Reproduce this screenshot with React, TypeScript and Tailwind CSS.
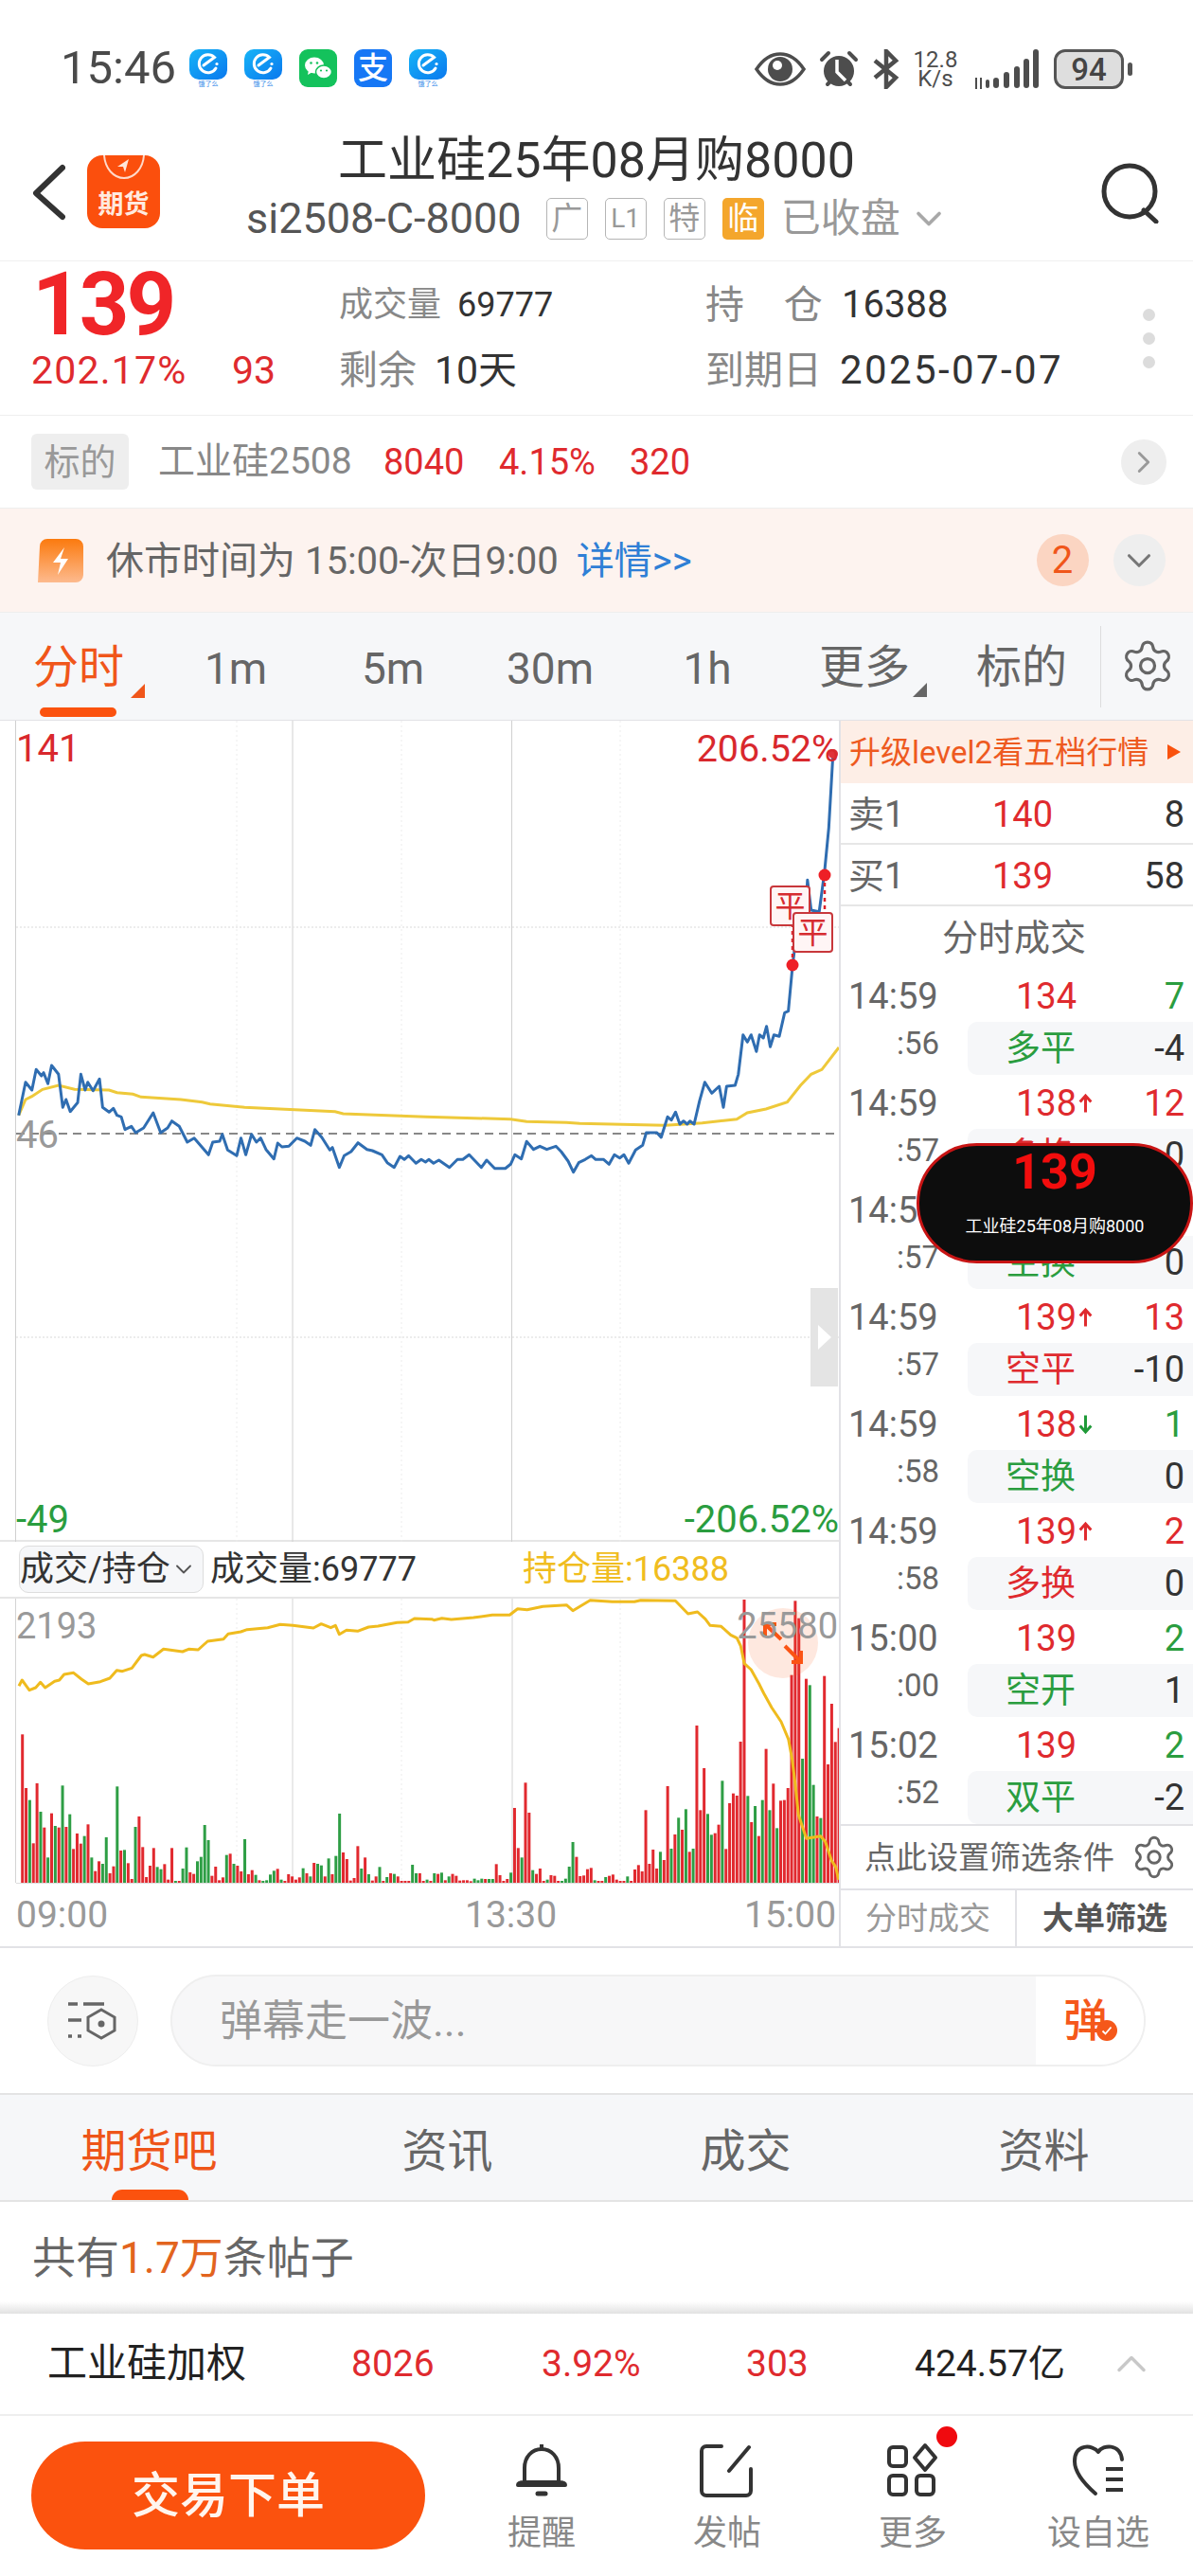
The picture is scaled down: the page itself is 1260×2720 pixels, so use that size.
import React from 'react';
import { Settings, ChevronRight, ChevronDown, ChevronUp } from 'lucide-react';

type Pt = [number, number];

// traced from the reference, x and y in crop coordinates
const priceRaw: Pt[] = [[35,1250],[48,1145],[60,1170],[68,1105],[78,1125],[82,1115],[90,1150],[97,1092],[110,1120],[118,1225],[124,1200],[132,1238],[146,1210],[152,1120],[160,1170],[165,1145],[175,1172],[187,1135],[193,1225],[205,1240],[213,1228],[220,1250],[228,1255],[235,1295],[247,1285],[255,1305],[270,1290],[288,1242],[302,1305],[315,1290],[323,1268],[337,1285],[352,1335],[365,1322],[392,1375],[400,1335],[413,1332],[418,1310],[428,1360],[445,1378],[453,1322],[462,1375],[473,1310],[482,1335],[490,1322],[500,1358],[515,1388],[522,1338],[530,1350],[543,1348],[558,1322],[573,1332],[584,1345],[592,1295],[605,1320],[620,1360],[625,1352],[638,1415],[647,1378],[660,1365],[673,1337],[690,1358],[700,1362],[718,1375],[728,1400],[741,1415],[752,1380],[760,1390],[768,1378],[782,1402],[792,1390],[800,1398],[806,1390],[815,1402],[825,1392],[845,1415],[860,1390],[870,1390],[882,1375],[905,1415],[915,1392],[930,1418],[950,1418],[960,1405],[968,1375],[980,1388],[990,1333],[1003,1358],[1015,1348],[1028,1358],[1045,1348],[1055,1365],[1068,1395],[1078,1430],[1088,1400],[1100,1390],[1112,1378],[1120,1390],[1135,1390],[1145,1405],[1155,1375],[1165,1385],[1173,1375],[1182,1402],[1195,1360],[1208,1345],[1215,1305],[1235,1305],[1243,1320],[1255,1255],[1262,1265],[1270,1240],[1278,1278],[1285,1268],[1292,1278],[1297,1268],[1305,1278],[1315,1205],[1325,1145],[1338,1180],[1352,1158],[1360,1225],[1366,1158],[1382,1155],[1388,1120],[1397,995],[1405,1018],[1412,995],[1422,1048],[1428,995],[1435,1005],[1441,968],[1448,1033],[1455,995],[1465,1000],[1475,925],[1482,920],[1490,775],[1500,640],[1515,600],[1518,505],[1525,600],[1540,605],[1550,480],[1558,340],[1566,105]];
const avgRaw: Pt[] = [[35,1250],[48,1200],[60,1190],[80,1168],[110,1155],[140,1168],[205,1170],[220,1178],[250,1183],[265,1192],[340,1200],[380,1208],[395,1214],[460,1225],[630,1238],[645,1245],[800,1255],[960,1262],[990,1270],[1065,1273],[1090,1276],[1250,1282],[1320,1274],[1385,1262],[1405,1242],[1440,1230],[1480,1208],[1505,1155],[1525,1120],[1545,1105],[1577,1035]];
const holdA: Pt[] = [[12,277],[22,258],[45,290],[65,282],[80,265],[95,282],[125,262],[140,258],[155,240],[185,235],[210,255],[232,270],[270,263],[300,252],[322,227],[340,230],[370,220],[400,180],[410,177],[437,185],[470,160],[530,168],[550,160],[580,162],[610,135],[660,128],[675,112],[715,105],[735,98],[800,92],[840,82],[880,85],[945,93],[970,80],[1000,92],[1015,85],[1027,113],[1050,100],[1085,103],[1120,90],[1150,87],[1210,76],[1245,74],[1265,63],[1320,65]];
const holdB: Pt[] = [[25,68],[50,62],[80,66],[150,60],[210,52],[265,52],[290,32],[320,35],[370,25],[445,20],[465,38],[520,5],[590,10],[660,10],[680,5],[790,7],[830,48],[860,42],[885,65],[900,85],[935,88],[965,115],[985,125],[997,150],[1008,205],[1030,225],[1055,270],[1070,300],[1095,345],[1125,390],[1148,445],[1160,510],[1170,590],[1180,685],[1205,760],[1250,752],[1265,770],[1285,830],[1298,850],[1307,890]];

// bar tops, negative = green
const bars: number[] = [430,600,-638,775,585,-675,725,-820,680,-720,725,-592,723,-683,793,744,776,-752,715,-820,863,832,-840,-756,870,848,-595,798,-796,838,888,-723,690,787,882,846,790,-850,-857,841,890,790,-894,894,-855,-788,867,872,-832,-818,-717,-765,878,849,892,883,-812,808,-840,846,864,-762,873,860,-875,892,-894,-892,-874,-862,856,-890,894,873,880,890,883,-854,870,-880,837,-840,-845,880,-823,873,-815,-681,804,825,893,885,784,-855,820,-873,893,880,-850,894,-882,870,-872,880,894,894,894,-843,-870,870,894,-890,894,
  -870,872,-868,892,-880,872,878,893,892,892,895,-887,-892,-887,888,-888,-888,841,876,894,888,-868,663,790,-820,583,678,-860,872,855,894,-890,876,878,894,-894,-887,-849,-771,818,879,877,857,853,-892,894,894,-882,878,874,890,894,894,-880,894,858,844,864,670,840,795,855,-802,828,594,-792,747,-694,732,-667,802,-792,402,670,537,-682,-748,743,716,-577,793,648,617,624,453,3,-625,708,-657,752,-638,476,-670,586,-727,640,638,600,242,7,62,-507,254,-274,-590,690,-695,245,525,333,454,410];

const line = (p: Pt[], f: (q: Pt) => Pt) => p.map((q) => f(q).map((n) => n.toFixed(1)).join(',')).join(' ');
const pricePts = line(priceRaw, ([x, y]) => [x / 1.78, 760 + y / 3]);
const avgPts = line(avgRaw, ([x, y]) => [x / 1.78, 760 + y / 3]);
const holdPts = line(holdA, ([x, y]) => [16 + x / 3, 1690 + y / 3]) + ' ' + line(holdB, ([x, y]) => [450 + x / 3, 1690 + y / 3]);

const trades = [
  { t: '14:59', s: ':56', p: '134', arrow: '', q: '7', qc: 'text-[#2a9d3f]', tag: '多平', tc: 'text-[#2a9d3f]', d: '-4' },
  { t: '14:59', s: ':57', p: '138', arrow: 'up', q: '12', qc: 'text-[#df2a2e]', tag: '多换', tc: 'text-[#df2a2e]', d: '0' },
  { t: '14:59', s: ':57', p: '138', arrow: '', q: '3', qc: 'text-[#df2a2e]', tag: '空换', tc: 'text-[#2a9d3f]', d: '0' },
  { t: '14:59', s: ':57', p: '139', arrow: 'up', q: '13', qc: 'text-[#df2a2e]', tag: '空平', tc: 'text-[#df2a2e]', d: '-10' },
  { t: '14:59', s: ':58', p: '138', arrow: 'down', q: '1', qc: 'text-[#2a9d3f]', tag: '空换', tc: 'text-[#2a9d3f]', d: '0' },
  { t: '14:59', s: ':58', p: '139', arrow: 'up', q: '2', qc: 'text-[#df2a2e]', tag: '多换', tc: 'text-[#df2a2e]', d: '0' },
  { t: '15:00', s: ':00', p: '139', arrow: '', q: '2', qc: 'text-[#2a9d3f]', tag: '空开', tc: 'text-[#2a9d3f]', d: '1' },
  { t: '15:02', s: ':52', p: '139', arrow: '', q: '2', qc: 'text-[#2a9d3f]', tag: '双平', tc: 'text-[#2a9d3f]', d: '-2' },
];

const ElemeIcon = () => (
  <div className="flex w-[40px] flex-col items-center">
    <svg width="40" height="32" viewBox="0 0 40 32">
      <defs>
        <linearGradient id="ele" x1="0" y1="0" x2="1" y2="1">
          <stop offset="0" stopColor="#16b4f7" />
          <stop offset="1" stopColor="#0a78ee" />
        </linearGradient>
      </defs>
      <rect width="40" height="32" rx="10" fill="url(#ele)" />
      <path d="M28 20a9.5 9.5 0 1 1-1.5-11.5L15 17" fill="none" stroke="#fff" strokeWidth="3" strokeLinecap="round" />
      <circle cx="29" cy="15.5" r="1.6" fill="#fff" />
    </svg>
    <span className="mt-[1px] text-[7px] leading-[8px] text-[#2a86e8]">饿了么</span>
  </div>
);

const WechatIcon = () => (
  <svg width="40" height="40" viewBox="0 0 40 40">
    <rect width="40" height="40" rx="9" fill="#14c25c" />
    <ellipse cx="16" cy="17" rx="10" ry="8.5" fill="#fff" />
    <path d="M10 22l-1 5 5-3z" fill="#fff" />
    <ellipse cx="26" cy="24" rx="8.5" ry="7" fill="#fff" stroke="#14c25c" strokeWidth="1.5" />
    <circle cx="12.5" cy="14.5" r="1.3" fill="#14c25c" />
    <circle cx="19" cy="14.5" r="1.3" fill="#14c25c" />
    <circle cx="23" cy="22.5" r="1.1" fill="#14c25c" />
    <circle cx="29" cy="22.5" r="1.1" fill="#14c25c" />
  </svg>
);

const AlipayIcon = () => (
  <div className="flex h-[40px] w-[40px] items-center justify-center rounded-[9px] bg-[#1677f5] text-[32px] font-medium leading-none text-white">支</div>
);

const Arrow = ({ dir }: { dir: string }) => (
  <svg width="17" height="24" viewBox="0 0 16 22" className="ml-[1px]">
    {dir === 'up' ? (
      <path d="M8 20V4M2.5 9.5L8 3.5l5.5 6" fill="none" stroke="#df2a2e" strokeWidth="2.8" />
    ) : (
      <path d="M8 2v16M2.5 12.5L8 18.5l5.5-6" fill="none" stroke="#1f9a38" strokeWidth="2.8" />
    )}
  </svg>
);

const Mark = ({ className }: { className: string }) => (
  <div className={`absolute flex h-[43px] w-[43px] items-center justify-center rounded-[4px] border-2 border-[#c8373b] bg-[#fff5f5] text-[32px] leading-none text-[#d62c30] ${className}`}>平</div>
);

const App: React.FC = () => {
  return (
    <div className="relative h-[2720px] w-[1260px] overflow-hidden bg-white font-[Roboto,'Noto_Sans_CJK_SC',sans-serif] text-[#333]">
      {/* status bar */}
      <div className="flex h-[130px] items-start pt-[52px]">
        <span className="ml-[64px] w-[136px] text-[49px] leading-[40px] text-[#4a4a4a]">15:46</span>
        <div className="flex gap-[18px]">
          <ElemeIcon />
          <ElemeIcon />
          <WechatIcon />
          <AlipayIcon />
          <ElemeIcon />
        </div>
        <div className="ml-[325px] flex items-center text-[#4d4d4d]">
          <svg width="54" height="40" viewBox="0 0 54 40">
            <path d="M2 20C10 8 18 4 27 4s17 4 25 16c-8 12-16 16-25 16S10 32 2 20z" fill="none" stroke="#4d4d4d" strokeWidth="3.5" />
            <circle cx="27" cy="20" r="13" fill="#4d4d4d" />
            <circle cx="24" cy="16" r="5" fill="#fff" />
          </svg>
          <svg width="42" height="42" viewBox="0 0 42 42" className="ml-[14px]">
            <circle cx="21" cy="23" r="16" fill="#4d4d4d" />
            <path d="M3 11l7-7M39 11l-7-7M9 37l4-4M33 37l-4-4" stroke="#4d4d4d" strokeWidth="4" strokeLinecap="round" />
            <path d="M19 11v13l9 9" fill="none" stroke="#fff" strokeWidth="3.5" />
          </svg>
          <svg width="28" height="42" viewBox="0 0 28 42" className="ml-[15px]">
            <path d="M2 12l22 18-10 10V2l10 10L2 30" fill="none" stroke="#4d4d4d" strokeWidth="4.5" />
          </svg>
          <div className="ml-[12px] flex w-[52px] flex-col items-center text-[24px] leading-[20px] text-[#4d4d4d]">
            <span>12.8</span>
            <span>K/s</span>
          </div>
          <svg width="72" height="42" viewBox="0 0 72 42" className="ml-[12px]">
            <path d="M5 30v12M10 30v12" stroke="#4d4d4d" strokeWidth="2" />
            <rect x="15" y="32" width="4" height="9" rx="2" fill="#4d4d4d" />
            <rect x="23" y="30" width="6" height="11" rx="3" fill="#4d4d4d" />
            <rect x="34" y="24" width="6" height="17" rx="3" fill="#4d4d4d" />
            <rect x="45" y="18" width="6" height="23" rx="3" fill="#4d4d4d" />
            <rect x="55" y="10" width="6" height="31" rx="3" fill="#4d4d4d" />
            <rect x="65" y="0" width="6" height="41" rx="3" fill="#4d4d4d" />
          </svg>
          <div className="ml-[15px] flex h-[42px] w-[74px] items-center justify-center rounded-[12px] border-[3px] border-[#555] bg-[#dedede] text-[33px] font-medium leading-none text-[#444]">94</div>
          <div className="ml-[4px] h-[14px] w-[5px] rounded-full bg-[#555]" />
        </div>
      </div>

      {/* title */}
      <div className="grid h-[146px] grid-cols-[260px_740px_260px] border-b border-[#f0f0f0]">
        <div className="flex items-start pl-[33px] pt-[34px]">
          <svg width="36" height="60" viewBox="0 0 36 60" className="mt-[9px]">
            <path d="M33 4L5 31l28 25" fill="none" stroke="#333" strokeWidth="6" strokeLinecap="round" strokeLinejoin="round" />
          </svg>
          <div className="relative ml-[23px] flex h-[77px] w-[77px] items-end justify-center overflow-hidden rounded-[16px] bg-[#fb4f0d] pb-[11px]">
            <svg width="77" height="30" viewBox="0 0 77 30" className="absolute left-0 top-0">
              <path d="M18 0c1 14 10 24 21 24S59 14 60 0" fill="none" stroke="#ffd9c9" strokeWidth="2" />
              <path d="M32 12l12-8-4 14-2-6z" fill="#ffe6da" />
            </svg>
            <span className="text-[27px] font-bold leading-none text-[#ffeadf]">期货</span>
          </div>
        </div>
        <div className="flex flex-col items-center">
          <div className="mt-[12px] text-[52px] leading-[56px] text-[#333]">工业硅25年08月购8000</div>
          <div className="mt-[10px] flex w-[740px] items-center whitespace-nowrap">
            <span className="shrink-0 text-[45px] leading-none text-[#555]">si2508-C-8000</span>
            <span className="ml-[26px] flex h-[44px] w-[44px] shrink-0 items-center justify-center rounded-[5px] border border-[#b5b5b5] text-[33px] leading-none text-[#999]">广</span>
            <span className="ml-[18px] flex h-[44px] w-[44px] shrink-0 items-center justify-center rounded-[5px] border border-[#b5b5b5] text-[28px] leading-none text-[#999]">L1</span>
            <span className="ml-[18px] flex h-[44px] w-[44px] shrink-0 items-center justify-center rounded-[5px] border border-[#b5b5b5] text-[33px] leading-none text-[#999]">特</span>
            <span className="ml-[18px] flex h-[44px] w-[44px] shrink-0 items-center justify-center rounded-[5px] bg-[#f4a62c] text-[33px] leading-none text-white">临</span>
            <span className="ml-[18px] shrink-0 text-[42px] leading-none text-[#999]">已收盘</span>
            <ChevronDown size={44} strokeWidth={2} className="ml-[8px] shrink-0 text-[#a8a8a8]" />
          </div>
        </div>
        <div className="flex justify-end pr-[32px] pt-[40px]">
          <svg width="66" height="66" viewBox="0 0 66 66">
            <circle cx="31" cy="32" r="27" fill="none" stroke="#333" strokeWidth="5" />
            <path d="M46 52l13 12" stroke="#333" strokeWidth="5" strokeLinecap="round" />
          </svg>
        </div>
      </div>

      {/* quote */}
      <div className="grid h-[163px] grid-cols-[358px_387px_455px_60px] grid-rows-[92px_46px] items-center border-b border-[#eee]">
        <div className="pl-[34px] text-[92px] font-bold leading-none tracking-[-3px] text-[#f02528]">139</div>
        <div className="flex items-center">
          <span className="text-[36px] leading-none text-[#888]">成交量</span>
          <span className="ml-[17px] text-[36px] leading-none text-[#333]">69777</span>
        </div>
        <div className="flex items-center">
          <span className="w-[144px] text-[41px] leading-none text-[#888]">持&emsp;仓</span>
          <span className="text-[40px] leading-none text-[#333]">16388</span>
        </div>
        <div className="row-span-2 flex flex-col items-start gap-[12px] pl-[7px] pt-[24px]">
          <i className="h-[13px] w-[13px] rounded-full bg-[#dcdcdc]" />
          <i className="h-[13px] w-[13px] rounded-full bg-[#dcdcdc]" />
          <i className="h-[13px] w-[13px] rounded-full bg-[#dcdcdc]" />
        </div>
        <div className="flex items-center pl-[33px] text-[41px] leading-none text-[#df2a2e]">
          <span className="w-[212px] tracking-[1.2px]">202.17%</span>
          <span>93</span>
        </div>
        <div className="flex items-center">
          <span className="text-[41px] leading-none text-[#888]">剩余</span>
          <span className="ml-[19px] text-[41px] leading-none text-[#333]">10天</span>
        </div>
        <div className="flex items-center">
          <span className="w-[142px] text-[41px] leading-none text-[#888]">到期日</span>
          <span className="text-[42px] leading-none tracking-[2.4px] text-[#333]">2025-07-07</span>
        </div>
      </div>

      {/* underlying */}
      <div className="flex h-[98px] items-center border-b border-[#eee] pl-[33px] text-[38px] leading-none">
        <span className="flex h-[59px] w-[103px] items-center justify-center rounded-[6px] bg-[#eeeeee] text-[#999]">标的</span>
        <span className="ml-[31px] w-[238px] text-[39px] text-[#888]">工业硅2508</span>
        <span className="w-[122px] text-[#df2a2e]">8040</span>
        <span className="w-[138px] text-[#df2a2e]">4.15%</span>
        <span className="text-[#df2a2e]">320</span>
        <span className="ml-[455px] flex h-[48px] w-[48px] items-center justify-center rounded-full bg-[#eeeeee] text-[#999]">
          <ChevronRight size={38} strokeWidth={1.8} />
        </span>
      </div>

      {/* closed notice */}
      <div className="flex h-[110px] items-center border-b border-[#eee] bg-[#fdf3ef] pl-[40px]">
        <svg width="48" height="46" viewBox="0 0 48 46">
          <defs>
            <linearGradient id="bolt" x1="0" y1="0" x2="0" y2="1">
              <stop offset="0" stopColor="#fb7a0e" />
              <stop offset="1" stopColor="#fdba8e" />
            </linearGradient>
          </defs>
          <path d="M10 0h30a8 8 0 0 1 8 8v30a8 8 0 0 1-8 8H0L2 8a8 8 0 0 1 8-8z" fill="url(#bolt)" />
          <path d="M28 9L16 25h8l-3 13 11-17h-8z" fill="#fff" />
        </svg>
        <span className="ml-[24px] mt-[2px] text-[40px] leading-none text-[#666]">休市时间为 15:00-次日9:00</span>
        <span className="ml-[19px] mt-[2px] text-[40px] leading-none text-[#2f7fd6]">详情&gt;&gt;</span>
        <span className="ml-[364px] flex h-[55px] w-[55px] items-center justify-center rounded-full bg-[#fbd5c2] text-[40px] leading-none text-[#f0561a]">2</span>
        <span className="ml-[26px] flex h-[55px] w-[55px] items-center justify-center rounded-full bg-[#eeeeee] text-[#777]">
          <ChevronDown size={42} strokeWidth={1.8} />
        </span>
      </div>

      {/* periods */}
      <div className="grid h-[113px] grid-cols-[repeat(7,166px)_1fr] items-start bg-[#f6f7f9] text-[46px] leading-none text-[#666]">
        <div className="relative flex h-[113px] justify-center pt-[34px] text-[48px] text-[#f0561a]">
          分时
          <span className="absolute bottom-[23px] left-[138px] h-0 w-0 border-b-[15px] border-l-[15px] border-b-[#f0561a] border-l-transparent" />
          <span className="absolute bottom-[3px] left-[42px] h-[10px] w-[81px] rounded-full bg-[#fb520e]" />
        </div>
        <div className="flex justify-center pt-[36px]">1m</div>
        <div className="flex justify-center pt-[36px]">5m</div>
        <div className="flex justify-center pt-[36px]">30m</div>
        <div className="flex justify-center pt-[36px]">1h</div>
        <div className="relative flex justify-center pt-[34px] text-[48px]">
          更多
          <span className="absolute left-[134px] top-[74px] h-0 w-0 border-b-[15px] border-l-[15px] border-b-[#666] border-l-transparent" />
        </div>
        <div className="flex justify-center pt-[34px] text-[48px]">标的</div>
        <div className="mt-[14px] flex h-[86px] items-center justify-center border-l border-[#ddd] pb-[3px]">
          <Settings size={60} strokeWidth={1.3} className="text-[#666]" />
        </div>
      </div>

      {/* chart + trades */}
      <div className="flex h-[1297px] border-b-2 border-t border-[#e2e2e6]">
        <div className="flex w-[886px] flex-col">
          <div className="relative h-[867px] border-b-2 border-[#e6e6e6]">
            <svg className="absolute inset-0" width="886" height="867" viewBox="0 760 886 867">
              <path d="M16.5 760v868M309 760v868M540.5 760v868" stroke="#d0d0d0" strokeWidth="1" />
              <path d="M250 760v868M424 760v868M655 760v868" stroke="#ececec" strokeWidth="1" strokeDasharray="2 3" />
              <path d="M17 978h869M17 1411h869" stroke="#e6e6e6" strokeWidth="1.5" strokeDasharray="2 2" />
              <path d="M17 1196h869" stroke="#888" strokeWidth="2" strokeDasharray="9 6" />
              <polyline points={avgPts} fill="none" stroke="#eec93a" strokeWidth="3" />
              <polyline points={pricePts} fill="none" stroke="#2f6db1" strokeWidth="3" strokeLinejoin="round" />
              <path d="M837 1018v-60M871 923v50" stroke="#e02028" strokeWidth="2.5" strokeDasharray="4 4" />
              <circle cx="837" cy="1018" r="6.5" fill="#ee1f26" />
              <circle cx="871" cy="923" r="6.5" fill="#ee1f26" />
              <circle cx="880" cy="795" r="5" fill="#e0323a" />
            </svg>
            <span className="absolute left-[17px] top-[10px] text-[40px] leading-none text-[#d9282d]">141</span>
            <span className="absolute right-[0px] top-[10px] text-[39.5px] leading-none text-[#d9282d]">206.52%</span>
            <span className="absolute left-[17px] top-[418px] text-[40px] leading-none text-[#999]">46</span>
            <span className="absolute bottom-[1px] left-[17px] h-[40px] text-[40px] leading-none text-[#2a9d3f]">-49</span>
            <span className="absolute bottom-[1px] right-[0px] h-[40px] text-[40px] leading-none text-[#2a9d3f]">-206.52%</span>
            <Mark className="left-[813px] top-[174px]" />
            <Mark className="left-[837px] top-[202px]" />
            <div className="absolute left-[856px] top-[599px] flex h-[104px] w-[29px] items-center justify-center bg-[#e4e4e4]">
              <span className="h-0 w-0 border-y-[13px] border-l-[14px] border-y-transparent border-l-white" />
            </div>
          </div>

          <div className="flex h-[60px] items-center border-b-2 border-[#e6e6e6] text-[36px] leading-none">
            <div className="ml-[20px] flex h-[50px] w-[195px] shrink-0 items-center overflow-hidden whitespace-nowrap rounded-[10px] border border-[#ddd] bg-[#f6f7f9] text-[#333]">
              <span className="text-[36px]">成交/持仓</span>
              <ChevronDown size={28} strokeWidth={1.6} className="shrink-0 text-[#555]" />
            </div>
            <span className="ml-[7px] w-[330px] text-[#333]">成交量:69777</span>
            <span className="text-[#f0bd20]">持仓量:16388</span>
          </div>

          <div className="relative h-[303px] shrink-0">
            <svg className="absolute inset-0" width="886" height="303" viewBox="0 1690 886 303">
              <path d="M16.5 1690v300M309 1690v300M541 1690v300" stroke="#d4d4d4" strokeWidth="1" />
              <path d="M250 1690v300M424 1690v300M655 1690v300" stroke="#ececec" strokeWidth="1" strokeDasharray="2 3" />
              <path d="M17 1990.5h869" stroke="#ddd" strokeWidth="1" />
              {bars.map((b, i) => {
                const top = Math.abs(b);
                const h = (900 - top) / 3;
                return (
                  <rect key={i} x={22.2 + i * 3.85} y={1990 - h} width="3" height={h} fill={b < 0 ? '#2e9e45' : '#e1292f'} />
                );
              })}
              <circle cx="827" cy="1737" r="37" fill="#fb5a1c" fillOpacity="0.14" />
              <polyline points={holdPts} fill="none" stroke="#efbb1e" strokeWidth="3" strokeLinejoin="round" />
              <path d="M808 1717l17 16M808 1729v-12h12M829 1740l17 17M836 1757h10v-12" fill="none" stroke="#fb5414" strokeWidth="4" />
            </svg>
            <span className="absolute left-[17px] top-[10px] text-[38px] leading-none text-[#999]">2193</span>
            <span className="absolute right-[1px] top-[10px] text-[38px] leading-none text-[#999]">25580</span>
          </div>

          <div className="flex flex-1 items-center pb-[1px] pl-[17px] text-[39px] leading-none text-[#999]">
            <span className="w-[474px]">09:00</span>
            <span className="w-[295px]">13:30</span>
            <span>15:00</span>
          </div>
        </div>

        <div className="relative flex w-[374px] flex-col border-l-2 border-[#e2e2e6]">
          <div className="flex h-[66px] items-center justify-between bg-[#fdeee6] pl-[9px] pr-[13px] text-[33px] leading-none text-[#ee5a1f]">
            <span>升级level2看五档行情</span>
            <span className="h-0 w-0 border-y-[8px] border-l-[14px] border-y-transparent border-l-[#f9520e]" />
          </div>
          <div className="flex h-[65px] items-center border-b-2 border-[#e6e6e6] pl-[8px] pr-[9px] pt-[2px] text-[38px] leading-none">
            <span className="w-[152px] text-[#666]">卖1</span>
            <span className="flex-1 text-[#df2a2e]">140</span>
            <span className="text-[#333]">8</span>
          </div>
          <div className="flex h-[65px] items-center border-b-2 border-[#e6e6e6] pl-[8px] pr-[9px] pt-[2px] text-[38px] leading-none">
            <span className="w-[152px] text-[#666]">买1</span>
            <span className="flex-1 text-[#df2a2e]">139</span>
            <span className="text-[#333]">58</span>
          </div>
          <div className="flex h-[65px] items-center justify-center pr-[6px] text-[38px] leading-none text-[#666]">分时成交</div>

          <div className="flex flex-col">
            {trades.map((r, i) => (
              <div key={i} className="flex h-[113px]">
                <div className="flex w-[134px] flex-col pl-[8px] leading-none text-[#666]">
                  <span className="flex h-[57px] items-center pt-[2px] text-[38px]">{r.t}</span>
                  <span className="-mt-[2px] flex h-[48px] items-center justify-end pr-[30px] text-[33px]">{r.s}</span>
                </div>
                <div className="flex flex-1 flex-col leading-none">
                  <div className="flex h-[57px] items-center pl-[51px] pr-[9px] pt-[2px] text-[38px]">
                    <span className="text-[#df2a2e]">{r.p}</span>
                    {r.arrow && <Arrow dir={r.arrow} />}
                    <span className={`ml-auto ${r.qc}`}>{r.q}</span>
                  </div>
                  <div className="flex h-[56px] items-center rounded-l-[10px] bg-[#f6f7f9] pl-[40px] pr-[9px] text-[38px]">
                    <span className={`text-[37px] ${r.tc}`}>{r.tag}</span>
                    <span className="ml-auto text-[#333]">{r.d}</span>
                  </div>
                </div>
              </div>
            ))}
          </div>

          <div className="flex h-[68px] items-center border-t-2 border-[#e2e2e6] pl-[25px] text-[33px] leading-none text-[#666]">
            <span>点此设置筛选条件</span>
            <Settings size={50} strokeWidth={1.4} className="ml-[17px] text-[#666]" />
          </div>
          <div className="flex flex-1 border-t-2 border-[#e2e2e6] text-[33px] leading-none">
            <div className="flex w-[186px] items-center justify-center border-r-2 border-[#e2e2e6] text-[#999]">分时成交</div>
            <div className="flex flex-1 items-center justify-center font-bold text-[#555]">大单筛选</div>
          </div>

          <div className="absolute left-[80px] top-[446px] flex h-[127px] w-[292px] flex-col items-center rounded-full border-[3px] border-[#c81414] bg-[#0d0d0d]">
            <span className="text-[52px] font-bold leading-[56px] text-[#f20d0d]">139</span>
            <span className="mt-[20px] text-[18px] leading-none text-white">工业硅25年08月购8000</span>
          </div>
        </div>
      </div>

      {/* danmaku input */}
      <div className="flex h-[155px] items-center border-b-2 border-[#e4e4e4] pl-[50px]">
        <div className="flex h-[96px] w-[96px] items-center justify-center rounded-full border border-[#eee] bg-[#f7f7f7]">
          <svg width="56" height="42" viewBox="0 0 56 42">
            <path d="M2 3h10M18 3h22M2 20h14M2 37h4M12 37h4" stroke="#666" strokeWidth="3.5" />
            <path d="M37 9l14 8v14l-14 8-14-8V17z" fill="none" stroke="#666" strokeWidth="3" />
            <circle cx="37" cy="24" r="3.5" fill="#666" />
          </svg>
        </div>
        <div className="ml-[34px] flex h-[97px] w-[1030px] items-center overflow-hidden rounded-full border-2 border-[#efefef] bg-[#f7f7f8]">
          <span className="ml-[50px] mt-[2px] flex-1 text-[45px] leading-none text-[#999]">弹幕走一波...</span>
          <div className="relative flex h-full w-[114px] items-center bg-white pl-[29px] text-[47px] font-medium leading-none text-[#f5581a]">
            弹
            <span className="absolute bottom-[25px] left-[64px] flex h-[22px] w-[22px] items-center justify-center rounded-full bg-[#f5581a]">
              <svg width="14" height="14" viewBox="0 0 14 14">
                <path d="M2.5 7.5l3 3 6-7" fill="none" stroke="#fff" strokeWidth="1.8" />
              </svg>
            </span>
          </div>
        </div>
      </div>

      {/* tabs */}
      <div className="grid h-[113px] grid-cols-4 border-b-2 border-[#e4e4e4] bg-[#f6f7f9] text-[48px] leading-none text-[#666]">
        <div className="relative flex justify-center pt-[36px] text-[#ee5519]">
          期货吧
          <span className="absolute bottom-0 left-[118px] h-[11px] w-[81px] rounded-t-full bg-[#fb520e]" />
        </div>
        <div className="flex justify-center pt-[36px]">资讯</div>
        <div className="flex justify-center pt-[36px]">成交</div>
        <div className="flex justify-center pt-[36px]">资料</div>
      </div>

      {/* post count */}
      <div className="flex h-[105px] items-center pl-[34px] pt-[12px] text-[46px] leading-none text-[#666]">
        共有<span className="text-[#e2641e]">1.7万</span>条帖子
      </div>
      <div className="h-[13px] bg-gradient-to-b from-white to-[#e2e2e2]" />

      {/* index bar */}
      <div className="flex h-[108px] items-center border-b-2 border-[#eeeeee] bg-white pl-[50px] text-[39px] leading-none">
        <span className="w-[321px] text-[42px] text-[#222]">工业硅加权</span>
        <span className="w-[201px] text-[#df2a2e]">8026</span>
        <span className="w-[216px] text-[#df2a2e]">3.92%</span>
        <span className="w-[178px] text-[#df2a2e]">303</span>
        <span className="w-[203px] text-[#222]">424.57亿</span>
        <ChevronUp size={52} strokeWidth={1.6} className="text-[#c8c8c8]" />
      </div>

      {/* bottom nav */}
      <div className="flex flex-1 items-start pl-[33px] pt-[27px]">
        <div className="flex h-[114px] w-[416px] items-center justify-center rounded-full bg-[#fb520e] text-[51px] font-medium leading-none text-[#fff5ee]">交易下单</div>
        <div className="ml-[25px] grid grid-cols-[196px_196px_196px_196px] text-[36px] leading-none text-[#888]">
          <div className="flex flex-col items-center gap-[20px]">
            <svg width="60" height="58" viewBox="0 0 60 58" className="mt-[1px]">
              <path d="M30 2v5M12 42V27C12 15 20 7 30 7s18 8 18 20v15M5 45c0-2 2-3 7-3h36c5 0 7 1 7 3H5z" fill="none" stroke="#333" strokeWidth="4" strokeLinejoin="round" />
              <path d="M26 54h8" stroke="#333" strokeWidth="5" strokeLinecap="round" />
            </svg>
            <span>提醒</span>
          </div>
          <div className="flex flex-col items-center gap-[20px]">
            <svg width="60" height="58" viewBox="0 0 60 58" className="mt-[1px]">
              <path d="M24 4H8a5 5 0 0 0-5 5v42a5 5 0 0 0 5 5h42a5 5 0 0 0 5-5V28M53 5L32 30" fill="none" stroke="#333" strokeWidth="4" strokeLinecap="round" />
            </svg>
            <span>发帖</span>
          </div>
          <div className="relative flex flex-col items-center gap-[20px]">
            <svg width="60" height="58" viewBox="0 0 60 58" className="mt-[1px]">
              <rect x="5" y="5" width="18" height="20" rx="4" fill="none" stroke="#333" strokeWidth="4" />
              <path d="M43 3l11 13-11 13-11-13z" fill="none" stroke="#333" strokeWidth="4" strokeLinejoin="round" />
              <rect x="5" y="35" width="18" height="20" rx="4" fill="none" stroke="#333" strokeWidth="4" />
              <rect x="34" y="35" width="18" height="20" rx="4" fill="none" stroke="#333" strokeWidth="4" />
            </svg>
            <span>更多</span>
            <i className="absolute left-[123px] top-[-16px] h-[22px] w-[22px] rounded-full bg-[#f00a0f]" />
          </div>
          <div className="flex flex-col items-center gap-[20px]">
            <svg width="60" height="58" viewBox="0 0 60 58" className="mt-[1px]">
              <path d="M30 10C24 2 5 1 5 20c0 13 14 27 22 34M30 10c5-8 23-9 25 8" fill="none" stroke="#333" strokeWidth="4" strokeLinecap="round" />
              <path d="M38 28h18M38 39h18M38 50h18" stroke="#333" strokeWidth="4" />
            </svg>
            <span>设自选</span>
          </div>
        </div>
      </div>
    </div>
  );
};

export default App;
